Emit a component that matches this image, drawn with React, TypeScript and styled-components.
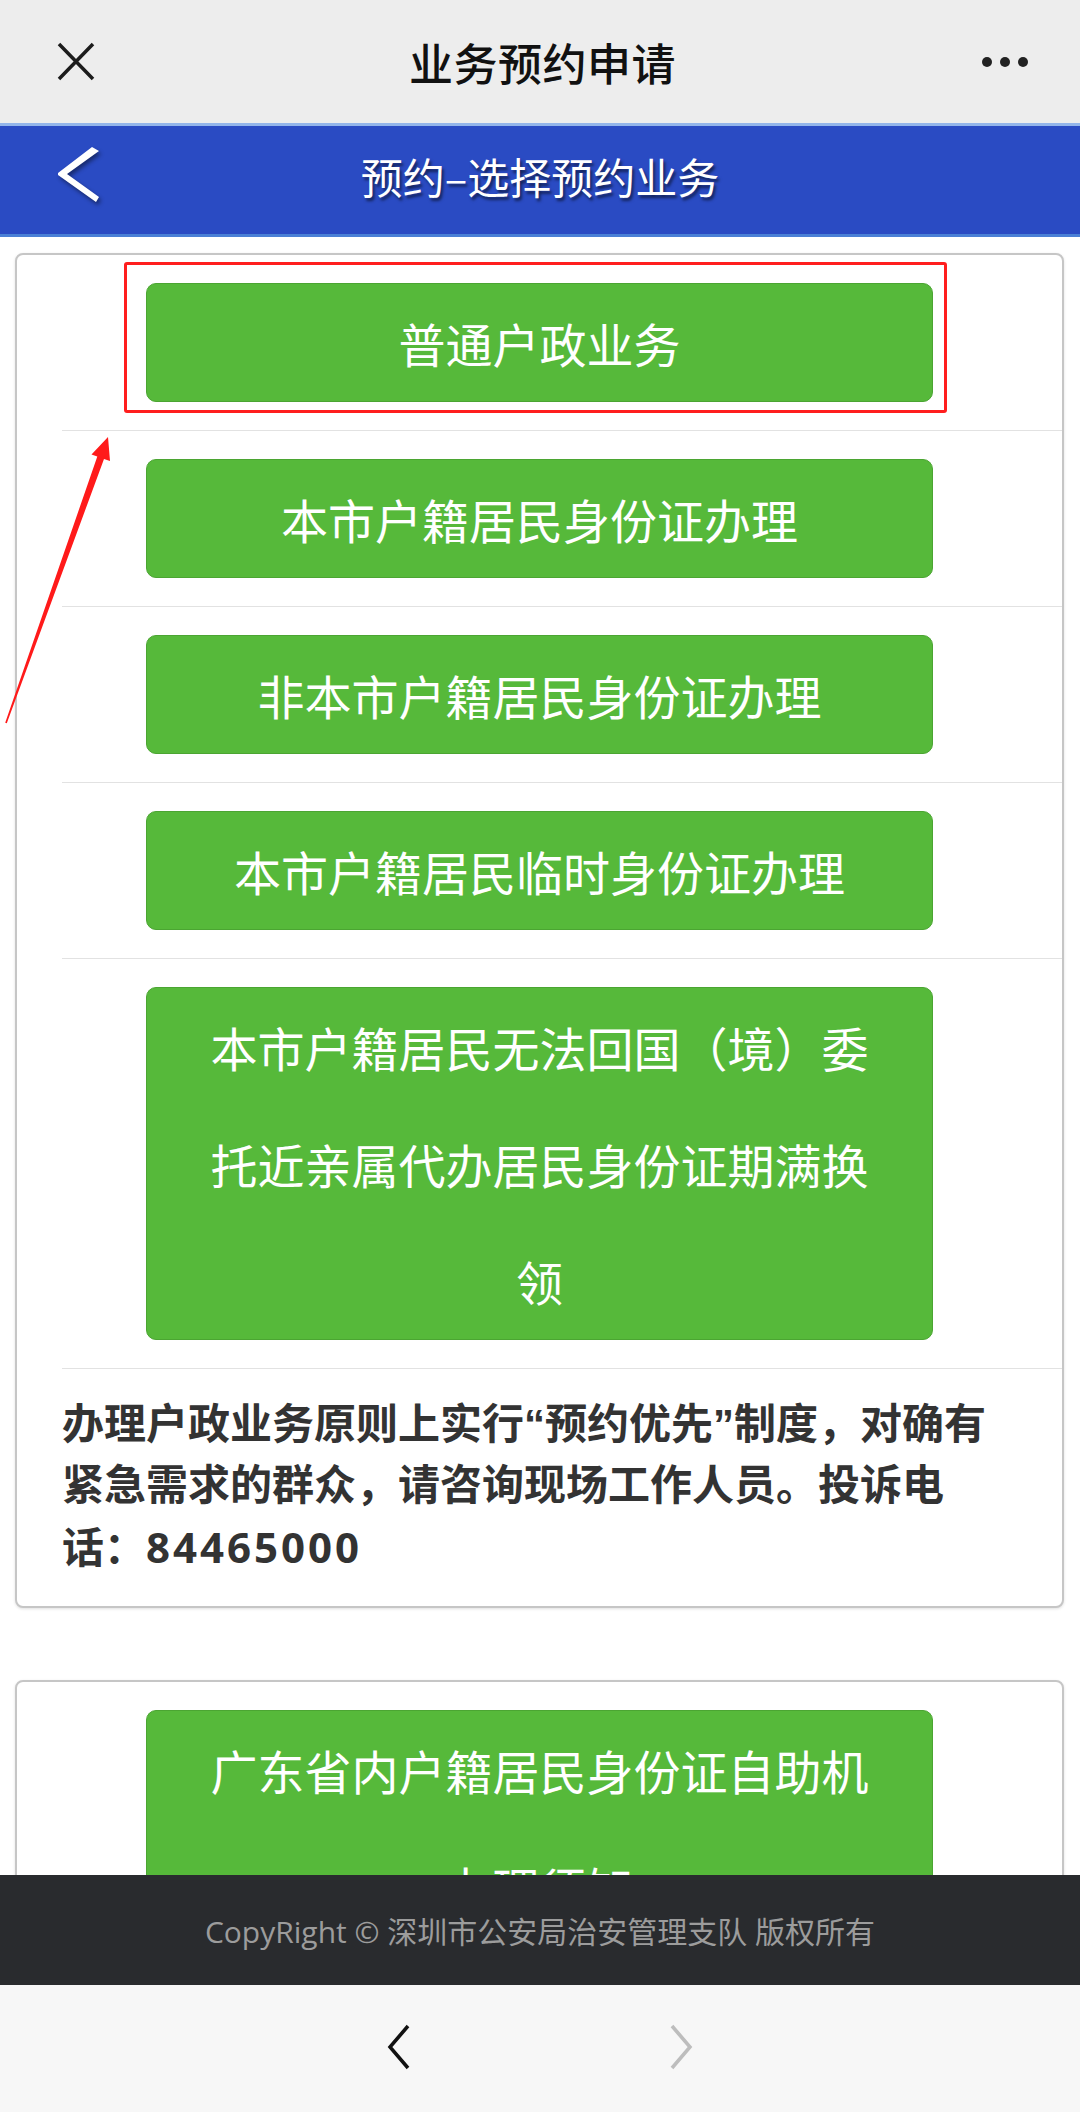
import styled, { createGlobalStyle } from 'styled-components';

const GlobalStyle = createGlobalStyle`
  html, body {
    margin: 0;
    padding: 0;
    background: #ffffff;
  }
  body {
    font-family: "Noto Sans CJK SC", "Noto Sans", sans-serif;
    -webkit-font-smoothing: antialiased;
  }
`;

const Page = styled.div`
  position: relative;
  width: 1080px;
  height: 2112px;
  overflow: hidden;
  background: #ffffff;
`;

const TopBar = styled.div`
  display: grid;
  grid-template-columns: 1fr auto 1fr;
  align-items: center;
  height: 123px;
  padding: 0 52px 0 57px;
  background: #ededed;
`;

const TopTitle = styled.div`
  font-size: 44px;
  font-weight: 500;
  color: #111111;
  letter-spacing: 0.5px;
`;

const TopRight = styled.div`
  display: flex;
  justify-content: flex-end;
  gap: 8px;
`;

const Dot = styled.span`
  width: 10px;
  height: 10px;
  border-radius: 50%;
  background: #222222;
`;

const Header = styled.div`
  display: grid;
  grid-template-columns: 1fr auto 1fr;
  align-items: center;
  height: 114px;
  padding: 0 55px 10px 55px;
  box-sizing: border-box;
  background: #2a4bc3;
  border-top: 3px solid #93b5ea;
  border-bottom: 3px solid #4a80d6;
`;

const HeaderTitle = styled.div`
  font-size: 42px;
  color: #ffffff;
  text-shadow: 2px 3px 3px rgba(0, 0, 0, 0.55);
`;

const Main = styled.main`
  display: flex;
  flex-direction: column;
  gap: 72px;
  padding: 16px 16px 0 15px;
`;

const Card = styled.section`
  background: #ffffff;
  border: 2px solid #c6c6c6;
  border-radius: 8px;
  box-shadow: 0 1px 3px rgba(0, 0, 0, 0.12);
`;

const Row = styled.div`
  margin-left: 45px;
  padding: 28px 129px 28px 84px;
  border-bottom: 1px solid #e2e2e2;
`;

const GreenButton = styled.button`
  display: block;
  width: 100%;
  padding: 0 44px;
  box-sizing: border-box;
  border: 1px solid #4ba532;
  border-radius: 10px;
  background: #56b93a;
  color: #ffffff;
  font-family: "Noto Sans CJK SC", sans-serif;
  font-size: 47px;
  font-weight: 400;
  line-height: 117px;
  text-align: center;
  white-space: normal;
  cursor: pointer;
`;

const Notice = styled.p`
  margin: 0;
  padding: 25px 62px 27px 45px;
  font-family: "Liberation Sans", "Noto Sans CJK SC", sans-serif;
  font-size: 42px;
  font-weight: 700;
  line-height: 61px;
  color: #333333;
`;

const Phone = styled.span`
  font-family: "Open Sans", "Liberation Sans", sans-serif;
  letter-spacing: 3px;
`;

const Footer = styled.footer`
  position: fixed;
  left: 0;
  right: 0;
  bottom: 127px;
  height: 110px;
  display: flex;
  align-items: center;
  justify-content: center;
  background: #292b2e;
  color: #9c9c9c;
  font-family: "Open Sans", "Noto Sans CJK SC", sans-serif;
  font-size: 30px;
`;

const BrowserNav = styled.nav`
  position: fixed;
  left: 0;
  right: 0;
  bottom: 0;
  height: 127px;
  display: flex;
  align-items: center;
  justify-content: center;
  gap: 256px;
  padding-bottom: 4px;
  box-sizing: border-box;
  background: #f7f7f7;
`;

const Highlight = styled.div`
  position: absolute;
  left: 124px;
  top: 262px;
  width: 823px;
  height: 151px;
  box-sizing: border-box;
  border: 3px solid #ff1e1e;
  border-radius: 3px;
  pointer-events: none;
`;

const ArrowMark = styled.svg`
  position: absolute;
  left: 0;
  top: 420px;
  pointer-events: none;
`;

const rows = [
  '普通户政业务',
  '本市户籍居民身份证办理',
  '非本市户籍居民身份证办理',
  '本市户籍居民临时身份证办理',
  '本市户籍居民无法回国（境）委托近亲属代办居民身份证期满换领',
];

const CloseIcon = () => (
  <svg width="38" height="39" viewBox="0 0 38 39">
    <path d="M2 2 L36 37 M36 2 L2 37" stroke="#1c1c1c" strokeWidth="3.5" fill="none" />
  </svg>
);

const BackIcon = () => (
  <svg width="48" height="60" viewBox="0 0 48 60" style={{ filter: 'drop-shadow(2px 3px 2px rgba(0,0,0,0.45))' }}>
    <polygon points="37,2 44,6 12,29 44,52 41,57 3,30 3,28" fill="#ffffff" />
  </svg>
);

const Chevron = ({ dir, color }: { dir: 'left' | 'right'; color: string }) => (
  <svg width="26" height="46" viewBox="0 0 26 46">
    <path
      d={dir === 'left' ? 'M22 2 L4 23 L22 44' : 'M4 2 L22 23 L4 44'}
      stroke={color}
      strokeWidth="3.5"
      fill="none"
      strokeLinejoin="miter"
    />
  </svg>
);

export default function App() {
  return (
    <Page>
      <GlobalStyle />
      <TopBar>
        <CloseIcon />
        <TopTitle>业务预约申请</TopTitle>
        <TopRight>
          <Dot />
          <Dot />
          <Dot />
        </TopRight>
      </TopBar>

      <Header>
        <BackIcon />
        <HeaderTitle>预约–选择预约业务</HeaderTitle>
        <span />
      </Header>

      <Main>
        <Card>
          {rows.map((label) => (
            <Row key={label}>
              <GreenButton type="button">{label}</GreenButton>
            </Row>
          ))}
          <Notice>
            办理户政业务原则上实行“预约优先”制度，对确有紧急需求的群众，请咨询现场工作人员。投诉电话：<Phone>84465000</Phone>
          </Notice>
        </Card>
        <Card>
          <Row>
            <GreenButton type="button">广东省内户籍居民身份证自助机办理须知</GreenButton>
          </Row>
        </Card>
      </Main>

      <Highlight />
      <ArrowMark width="130" height="320" viewBox="0 0 130 320">
        <polygon
          points="108,17 110,41 104,39 6.8,303.3 5.2,302.7 97.3,36.5 91.5,34.5"
          fill="#ff1a1a"
        />
      </ArrowMark>

      <Footer>CopyRight © 深圳市公安局治安管理支队 版权所有</Footer>
      <BrowserNav>
        <Chevron dir="left" color="#111111" />
        <Chevron dir="right" color="#bdbdbd" />
      </BrowserNav>
    </Page>
  );
}
